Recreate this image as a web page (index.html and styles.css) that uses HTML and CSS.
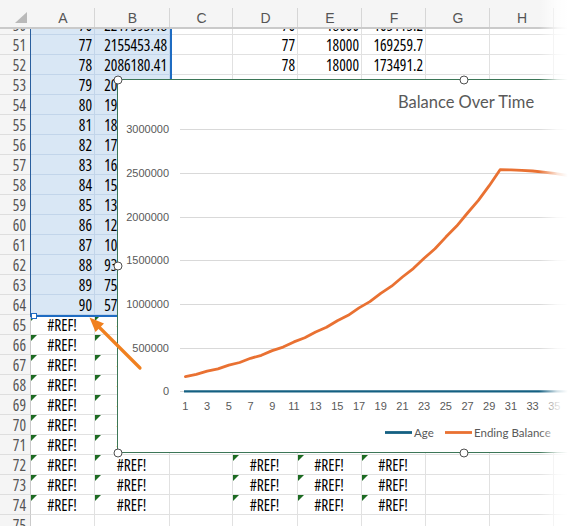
FILE: index.html
```html
<!DOCTYPE html>
<html>
<head>
<meta charset="utf-8">
<link rel="stylesheet" href="styles.css">
</head>
<body>
<div class="page">
  <div class="colhead">
    <div class="corner"><span></span></div>
    <div class="hc wa">A</div><div class="hc wb">B</div><div class="hc wc">C</div><div class="hc wd">D</div>
    <div class="hc we">E</div><div class="hc wf">F</div><div class="hc wg">G</div><div class="hc wh">H</div><div class="hc wi"></div>
  </div>
  <div class="sheet">
    <div class="rows">
      <div class="row"><div class="rh">50</div><div class="c wa sel num">76</div><div class="c wb sel num">2217593.48</div><div class="c wc"></div><div class="c wd num">76</div><div class="c we num">18000</div><div class="c wf num">165113.2</div><div class="c wg"></div><div class="c wh"></div><div class="c wi"></div></div>
      <div class="row"><div class="rh">51</div><div class="c wa sel num">77</div><div class="c wb sel num">2155453.48</div><div class="c wc"></div><div class="c wd num">77</div><div class="c we num">18000</div><div class="c wf num">169259.7</div><div class="c wg"></div><div class="c wh"></div><div class="c wi"></div></div>
      <div class="row"><div class="rh">52</div><div class="c wa sel num">78</div><div class="c wb sel num">2086180.41</div><div class="c wc"></div><div class="c wd num">78</div><div class="c we num">18000</div><div class="c wf num">173491.2</div><div class="c wg"></div><div class="c wh"></div><div class="c wi"></div></div>
      <div class="row"><div class="rh">53</div><div class="c wa sel num">79</div><div class="c wb sel num">2009871.23</div><div class="c wc"></div><div class="c wd"></div><div class="c we"></div><div class="c wf"></div><div class="c wg"></div><div class="c wh"></div><div class="c wi"></div></div>
      <div class="row"><div class="rh">54</div><div class="c wa sel num">80</div><div class="c wb sel num">1926304.57</div><div class="c wc"></div><div class="c wd"></div><div class="c we"></div><div class="c wf"></div><div class="c wg"></div><div class="c wh"></div><div class="c wi"></div></div>
      <div class="row"><div class="rh">55</div><div class="c wa sel num">81</div><div class="c wb sel num">1835139.71</div><div class="c wc"></div><div class="c wd"></div><div class="c we"></div><div class="c wf"></div><div class="c wg"></div><div class="c wh"></div><div class="c wi"></div></div>
      <div class="row"><div class="rh">56</div><div class="c wa sel num">82</div><div class="c wb sel num">1735672.90</div><div class="c wc"></div><div class="c wd"></div><div class="c we"></div><div class="c wf"></div><div class="c wg"></div><div class="c wh"></div><div class="c wi"></div></div>
      <div class="row"><div class="rh">57</div><div class="c wa sel num">83</div><div class="c wb sel num">1627158.36</div><div class="c wc"></div><div class="c wd"></div><div class="c we"></div><div class="c wf"></div><div class="c wg"></div><div class="c wh"></div><div class="c wi"></div></div>
      <div class="row"><div class="rh">58</div><div class="c wa sel num">84</div><div class="c wb sel num">1508804.42</div><div class="c wc"></div><div class="c wd"></div><div class="c we"></div><div class="c wf"></div><div class="c wg"></div><div class="c wh"></div><div class="c wi"></div></div>
      <div class="row"><div class="rh">59</div><div class="c wa sel num">85</div><div class="c wb sel num">1379769.60</div><div class="c wc"></div><div class="c wd"></div><div class="c we"></div><div class="c wf"></div><div class="c wg"></div><div class="c wh"></div><div class="c wi"></div></div>
      <div class="row"><div class="rh">60</div><div class="c wa sel num">86</div><div class="c wb sel num">1249148.19</div><div class="c wc"></div><div class="c wd"></div><div class="c we"></div><div class="c wf"></div><div class="c wg"></div><div class="c wh"></div><div class="c wi"></div></div>
      <div class="row"><div class="rh">61</div><div class="c wa sel num">87</div><div class="c wb sel num">1095992.13</div><div class="c wc"></div><div class="c wd"></div><div class="c we"></div><div class="c wf"></div><div class="c wg"></div><div class="c wh"></div><div class="c wi"></div></div>
      <div class="row"><div class="rh">62</div><div class="c wa sel num">88</div><div class="c wb sel num">931273.142</div><div class="c wc"></div><div class="c wd"></div><div class="c we"></div><div class="c wf"></div><div class="c wg"></div><div class="c wh"></div><div class="c wi"></div></div>
      <div class="row"><div class="rh">63</div><div class="c wa sel num">89</div><div class="c wb sel num">758404.817</div><div class="c wc"></div><div class="c wd"></div><div class="c we"></div><div class="c wf"></div><div class="c wg"></div><div class="c wh"></div><div class="c wi"></div></div>
      <div class="row"><div class="rh">64</div><div class="c wa sel num">90</div><div class="c wb sel num">573219.664</div><div class="c wc"></div><div class="c wd"></div><div class="c we"></div><div class="c wf"></div><div class="c wg"></div><div class="c wh"></div><div class="c wi"></div></div>
      <div class="row"><div class="rh">65</div><div class="c wa err">#REF!</div><div class="c wb err">#REF!</div><div class="c wc"></div><div class="c wd err">#REF!</div><div class="c we err">#REF!</div><div class="c wf err">#REF!</div><div class="c wg"></div><div class="c wh"></div><div class="c wi"></div></div>
      <div class="row"><div class="rh">66</div><div class="c wa err">#REF!</div><div class="c wb err">#REF!</div><div class="c wc"></div><div class="c wd err">#REF!</div><div class="c we err">#REF!</div><div class="c wf err">#REF!</div><div class="c wg"></div><div class="c wh"></div><div class="c wi"></div></div>
      <div class="row"><div class="rh">67</div><div class="c wa err">#REF!</div><div class="c wb err">#REF!</div><div class="c wc"></div><div class="c wd err">#REF!</div><div class="c we err">#REF!</div><div class="c wf err">#REF!</div><div class="c wg"></div><div class="c wh"></div><div class="c wi"></div></div>
      <div class="row"><div class="rh">68</div><div class="c wa err">#REF!</div><div class="c wb err">#REF!</div><div class="c wc"></div><div class="c wd err">#REF!</div><div class="c we err">#REF!</div><div class="c wf err">#REF!</div><div class="c wg"></div><div class="c wh"></div><div class="c wi"></div></div>
      <div class="row"><div class="rh">69</div><div class="c wa err">#REF!</div><div class="c wb err">#REF!</div><div class="c wc"></div><div class="c wd err">#REF!</div><div class="c we err">#REF!</div><div class="c wf err">#REF!</div><div class="c wg"></div><div class="c wh"></div><div class="c wi"></div></div>
      <div class="row"><div class="rh">70</div><div class="c wa err">#REF!</div><div class="c wb err">#REF!</div><div class="c wc"></div><div class="c wd err">#REF!</div><div class="c we err">#REF!</div><div class="c wf err">#REF!</div><div class="c wg"></div><div class="c wh"></div><div class="c wi"></div></div>
      <div class="row"><div class="rh">71</div><div class="c wa err">#REF!</div><div class="c wb err">#REF!</div><div class="c wc"></div><div class="c wd err">#REF!</div><div class="c we err">#REF!</div><div class="c wf err">#REF!</div><div class="c wg"></div><div class="c wh"></div><div class="c wi"></div></div>
      <div class="row"><div class="rh">72</div><div class="c wa err">#REF!</div><div class="c wb err">#REF!</div><div class="c wc"></div><div class="c wd err">#REF!</div><div class="c we err">#REF!</div><div class="c wf err">#REF!</div><div class="c wg"></div><div class="c wh"></div><div class="c wi"></div></div>
      <div class="row"><div class="rh">73</div><div class="c wa err">#REF!</div><div class="c wb err">#REF!</div><div class="c wc"></div><div class="c wd err">#REF!</div><div class="c we err">#REF!</div><div class="c wf err">#REF!</div><div class="c wg"></div><div class="c wh"></div><div class="c wi"></div></div>
      <div class="row"><div class="rh">74</div><div class="c wa err">#REF!</div><div class="c wb err">#REF!</div><div class="c wc"></div><div class="c wd err">#REF!</div><div class="c we err">#REF!</div><div class="c wf err">#REF!</div><div class="c wg"></div><div class="c wh"></div><div class="c wi"></div></div>
      <div class="row"><div class="rh">75</div><div class="c wa"></div><div class="c wb"></div><div class="c wc"></div><div class="c wd"></div><div class="c we"></div><div class="c wf"></div><div class="c wg"></div><div class="c wh"></div><div class="c wi"></div></div>
    </div>
    <div class="selbox"><span class="selmark"></span></div>
  </div>

  <div class="chart">
    <svg class="plot" width="498" height="372" viewBox="0 0 498 372">
      <text class="title" x="348" y="28" text-anchor="middle">Balance Over Time</text>
      <g class="grid">
        <line x1="62" y1="49.5" x2="498" y2="49.5"/>
        <line x1="62" y1="93.5" x2="498" y2="93.5"/>
        <line x1="62" y1="137.5" x2="498" y2="137.5"/>
        <line x1="62" y1="180.5" x2="498" y2="180.5"/>
        <line x1="62" y1="224.5" x2="498" y2="224.5"/>
        <line x1="62" y1="268.5" x2="498" y2="268.5"/>
        <line x1="62" y1="311.5" x2="498" y2="311.5"/>
      </g>
      <g class="ylab" text-anchor="end">
        <text x="51" y="53">3000000</text>
        <text x="51" y="97">2500000</text>
        <text x="51" y="141">2000000</text>
        <text x="51" y="184">1500000</text>
        <text x="51" y="228">1000000</text>
        <text x="51" y="272">500000</text>
        <text x="51" y="315">0</text>
      </g>
      <g class="xlab" text-anchor="middle">
        <text x="67.4" y="329.5">1</text>
        <text x="89.1" y="329.5">3</text>
        <text x="110.8" y="329.5">5</text>
        <text x="132.5" y="329.5">7</text>
        <text x="154.2" y="329.5">9</text>
        <text x="175.9" y="329.5">11</text>
        <text x="197.6" y="329.5">13</text>
        <text x="219.3" y="329.5">15</text>
        <text x="241.0" y="329.5">17</text>
        <text x="262.7" y="329.5">19</text>
        <text x="284.4" y="329.5">21</text>
        <text x="306.1" y="329.5">23</text>
        <text x="327.8" y="329.5">25</text>
        <text x="349.5" y="329.5">27</text>
        <text x="371.2" y="329.5">29</text>
        <text x="392.9" y="329.5">31</text>
        <text x="414.6" y="329.5">33</text>
        <text x="436.3" y="329.5">35</text>
      </g>
      <line class="age" x1="66" y1="311.3" x2="498" y2="311.3"/>
      <polyline class="bal" points="67.43,296.65 78.28,294.4 89.13,291.2 99.98,288.9 110.83,285.1 121.68,282.5 132.53,278.3 143.38,275.3 154.23,270.6 165.08,267.1 175.93,261.9 186.78,257.8 197.63,252.0 208.48,247.3 219.33,240.7 230.18,235.3 241.03,227.9 251.88,221.6 262.73,213.4 273.58,206.2 284.43,197.0 295.28,188.6 306.13,178.3 316.98,168.7 327.83,157.1 338.68,146.1 349.53,133.0 360.38,120.4 371.23,105.7 382.08,89.68 392.93,89.85 403.78,90.29 414.63,90.99 425.48,92.04 436.33,93.35 447.18,95.09 458.03,97.11 468.88,99.29 479.73,101.6"/>
      <g class="legend">
        <line class="lg-age" x1="267" y1="352.5" x2="294" y2="352.5"/>
        <text x="296" y="356.5">Age</text>
        <line class="lg-bal" x1="327" y1="352.5" x2="354" y2="352.5"/>
        <text x="356" y="356.5">Ending Balance</text>
      </g>
    </svg>
    <span class="handle h1"></span>
    <span class="handle h2"></span>
    <span class="handle h3"></span>
    <span class="handle h4"></span>
    <span class="handle h5"></span>
  </div>

  <svg class="arrow" width="575" height="526" viewBox="0 0 575 526">
    <line x1="140" y1="368" x2="98" y2="326"/>
    <polygon points="89.5,317.5 104,323.5 95.5,332"/>
  </svg>

  <div class="fade"></div>
</div>
</body>
</html>
```

FILE: styles.css
```css
html, body {
  margin: 0;
  padding: 0;
  background: #ffffff;
}

.page {
  position: relative;
  width: 575px;
  height: 526px;
  overflow: hidden;
  font-family: "Open Sans", "Liberation Sans", sans-serif;
}

/* widths */
.wa { width: 64px; }
.wb { width: 75px; }
.wc { width: 63px; }
.wd { width: 65px; }
.we { width: 64px; }
.wf { width: 64px; }
.wg { width: 64px; }
.wh { width: 64px; }
.wi { flex: 1 1 auto; }

/* column header */
.colhead {
  display: flex;
  height: 29px;
  box-sizing: border-box;
  background: #f5f5f5;
  border-bottom: 2px solid #cacaca;
}

.corner {
  width: 31px;
  flex: none;
  display: flex;
  justify-content: flex-end;
  align-items: flex-end;
  padding: 0 4px 4px 0;
  box-sizing: border-box;
}

.corner span {
  width: 0;
  height: 0;
  border-left: 12px solid transparent;
  border-bottom: 11px solid #b9b9b9;
}

.hc {
  flex: none;
  box-sizing: border-box;
  text-align: center;
  font-family: "Liberation Sans", sans-serif;
  font-size: 14px;
  line-height: 16px;
  padding-top: 10px;
  color: #555555;
  background: linear-gradient(#d6d6d6, #d6d6d6) right bottom / 1px 19px no-repeat;
}

.hc.wi { background: none; }

/* sheet body */
.sheet {
  position: relative;
  height: 497px;
  overflow: hidden;
}

.rows {
  margin-top: -14px;
}

.row {
  display: flex;
  height: 20px;
}

.rh {
  width: 31px;
  height: 20px;
  flex: none;
  box-sizing: border-box;
  background: #f5f5f5;
  border-right: 1px solid #cacaca;
  border-bottom: 1px solid #dedede;
  text-align: right;
  padding: 1px 4px 0 0;
  font-family: "Open Sans", "Liberation Sans", sans-serif;
  font-stretch: 75%;
  font-size: 15.5px;
  line-height: 19px;
  color: #555555;
}

.c {
  flex: none;
  height: 20px;
  box-sizing: border-box;
  position: relative;
  border-right: 1px solid #e1e1e1;
  border-bottom: 1px solid #e1e1e1;
  padding: 1px 2px 0 1px;
  font-family: "Open Sans", "Liberation Sans", sans-serif;
  font-stretch: 75%;
  font-size: 15.5px;
  line-height: 19px;
  color: #000000;
  white-space: nowrap;
}

.c.wi { flex: 1 1 auto; }

.num { text-align: right; }
.err { text-align: center; }

.err::before {
  content: "";
  position: absolute;
  left: 0;
  top: 0;
  border-top: 6px solid #1d6b22;
  border-right: 6px solid transparent;
}

.sel {
  background: #d9e7f5;
  border-right-color: #c2d5ea;
  border-bottom-color: #c2d5ea;
}

.selbox {
  position: absolute;
  left: 30px;
  top: -20px;
  width: 142px;
  height: 308px;
  box-sizing: border-box;
  border-left: 1px solid #2a5f9e;
  border-right: 2px solid #1f6cc2;
  border-bottom: 2px solid #1f6cc2;
  pointer-events: none;
}

.selmark {
  position: absolute;
  left: 0;
  bottom: -4px;
  width: 4px;
  height: 4px;
  background: #ffffff;
  border: 1px solid #1f6cc2;
}

/* chart */
.chart {
  position: absolute;
  left: 117px;
  top: 79px;
  width: 500px;
  height: 374px;
  box-sizing: border-box;
  border: 1px solid #3c7657;
  background: #ffffff;
}

.plot {
  display: block;
}

.title {
  font-family: "Lato", "Open Sans", sans-serif;
  font-size: 16.5px;
  fill: #595959;
}

.grid line {
  stroke: #d9d9d9;
  stroke-width: 1;
}

.ylab text, .xlab text {
  font-family: "Liberation Sans", sans-serif;
  font-size: 11px;
  fill: #595959;
}

.age {
  stroke: #156082;
  stroke-width: 2.2;
}

.bal {
  fill: none;
  stroke: #e97132;
  stroke-width: 2.8;
  stroke-linejoin: round;
  stroke-linecap: round;
}

.legend text {
  font-family: "Lato", "Open Sans", sans-serif;
  font-size: 11.5px;
  fill: #595959;
}

.lg-age { stroke: #156082; stroke-width: 2.8; }
.lg-bal { stroke: #e97132; stroke-width: 2.8; }

.handle {
  position: absolute;
  width: 7px;
  height: 7px;
  border-radius: 50%;
  background: #ffffff;
  border: 1.3px solid #505050;
  transform: translate(-50%, -50%);
}

.h1 { left: -0.5px; top: -0.5px; }
.h2 { left: 346px; top: -0.5px; }
.h3 { left: -0.5px; top: 186px; }
.h4 { left: -0.5px; top: 372.5px; }
.h5 { left: 346px; top: 372.5px; }

/* annotation arrow */
.arrow {
  position: absolute;
  left: 0;
  top: 0;
  pointer-events: none;
}

.arrow line {
  stroke: #f0801f;
  stroke-width: 3.2;
  stroke-linecap: round;
}

.arrow polygon {
  fill: #f0801f;
}

/* right edge fade */
.fade {
  position: absolute;
  top: 0;
  right: 0;
  width: 36px;
  height: 526px;
  background: linear-gradient(to right, rgba(255,255,255,0) 0%, rgba(255,255,255,0.8) 50%, #ffffff 80%);
  pointer-events: none;
}
```
